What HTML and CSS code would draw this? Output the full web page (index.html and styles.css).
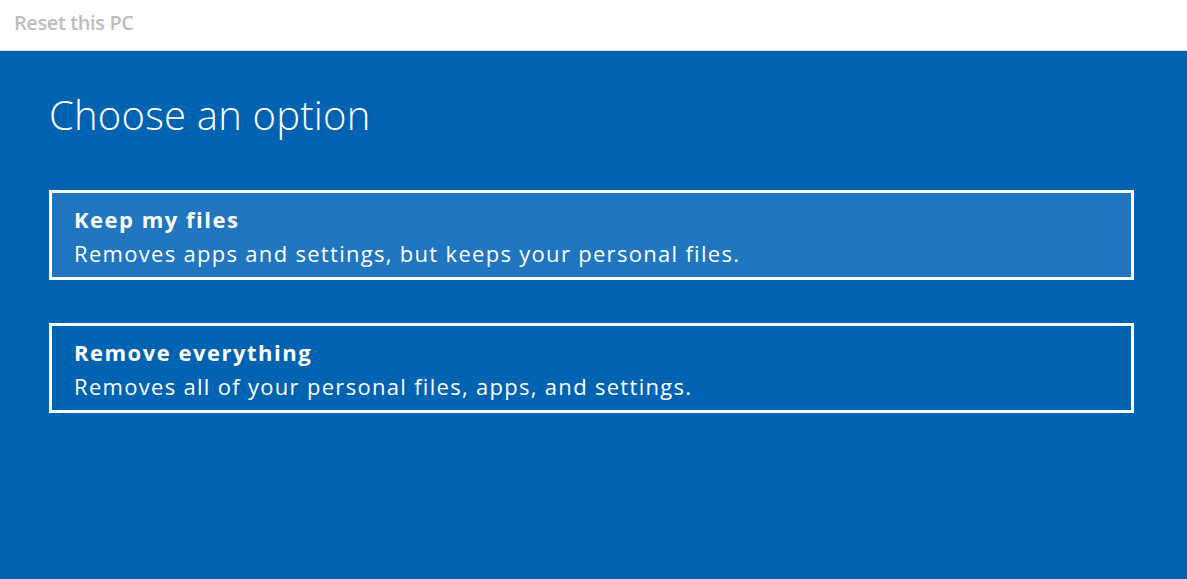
FILE: index.html
```html
<!DOCTYPE html>
<html lang="en">
<head>
  <meta charset="UTF-8" />
  <title>Reset this PC</title>
  <link rel="stylesheet" href="styles.css">
</head>
<body>
  <!-- Window title bar -->
  <header class="titlebar">Reset this PC</header>

  <!-- Options -->
  <main class="panel">
    <h1>Choose an option</h1>
    <div class="option active">
      <div class="option-title">Keep my files</div>
      <div class="option-desc">Removes apps and settings, but keeps your personal files.</div>
    </div>
    <div class="option">
      <div class="option-title">Remove everything</div>
      <div class="option-desc">Removes all of your personal files, apps, and settings.</div>
    </div>
  </main>
</body>
</html>
```

FILE: styles.css
```css
html, body {
  height: 100%;
}

body {
  margin: 0;
  font-family: 'Open Sans', 'Noto Sans', sans-serif;
  background: #0063b1;
  display: flex;
  flex-direction: column;
}

/* Title bar */
.titlebar {
  height: 51px;
  box-sizing: border-box;
  padding: 8px 14px 0;
  background: #fff;
  border-bottom: 1px solid #d4e2ee;
  color: #bdbdbd;
  font-size: 20px;
  font-weight: 600;
  letter-spacing: -0.4px;
  line-height: 30px;
}

/* Main panel */
.panel {
  flex: 1;
  padding: 40px 53px 0 49px;
  color: #fff;
}

.panel h1 {
  margin: 0 0 51px;
  font-size: 40px;
  font-weight: 300;
  line-height: 48px;
  letter-spacing: 0.2px;
}

.option {
  height: 90px;
  box-sizing: border-box;
  border: 3px solid #fff;
  padding: 10px 22px 0;
  margin-bottom: 43px;
}

.option.active {
  background: #2076bf;
}

.option-title {
  font-size: 22px;
  font-weight: 700;
  line-height: 32px;
  letter-spacing: 1.5px;
}

.option-desc {
  font-size: 22px;
  line-height: 36px;
  letter-spacing: 1.3px;
}
```
